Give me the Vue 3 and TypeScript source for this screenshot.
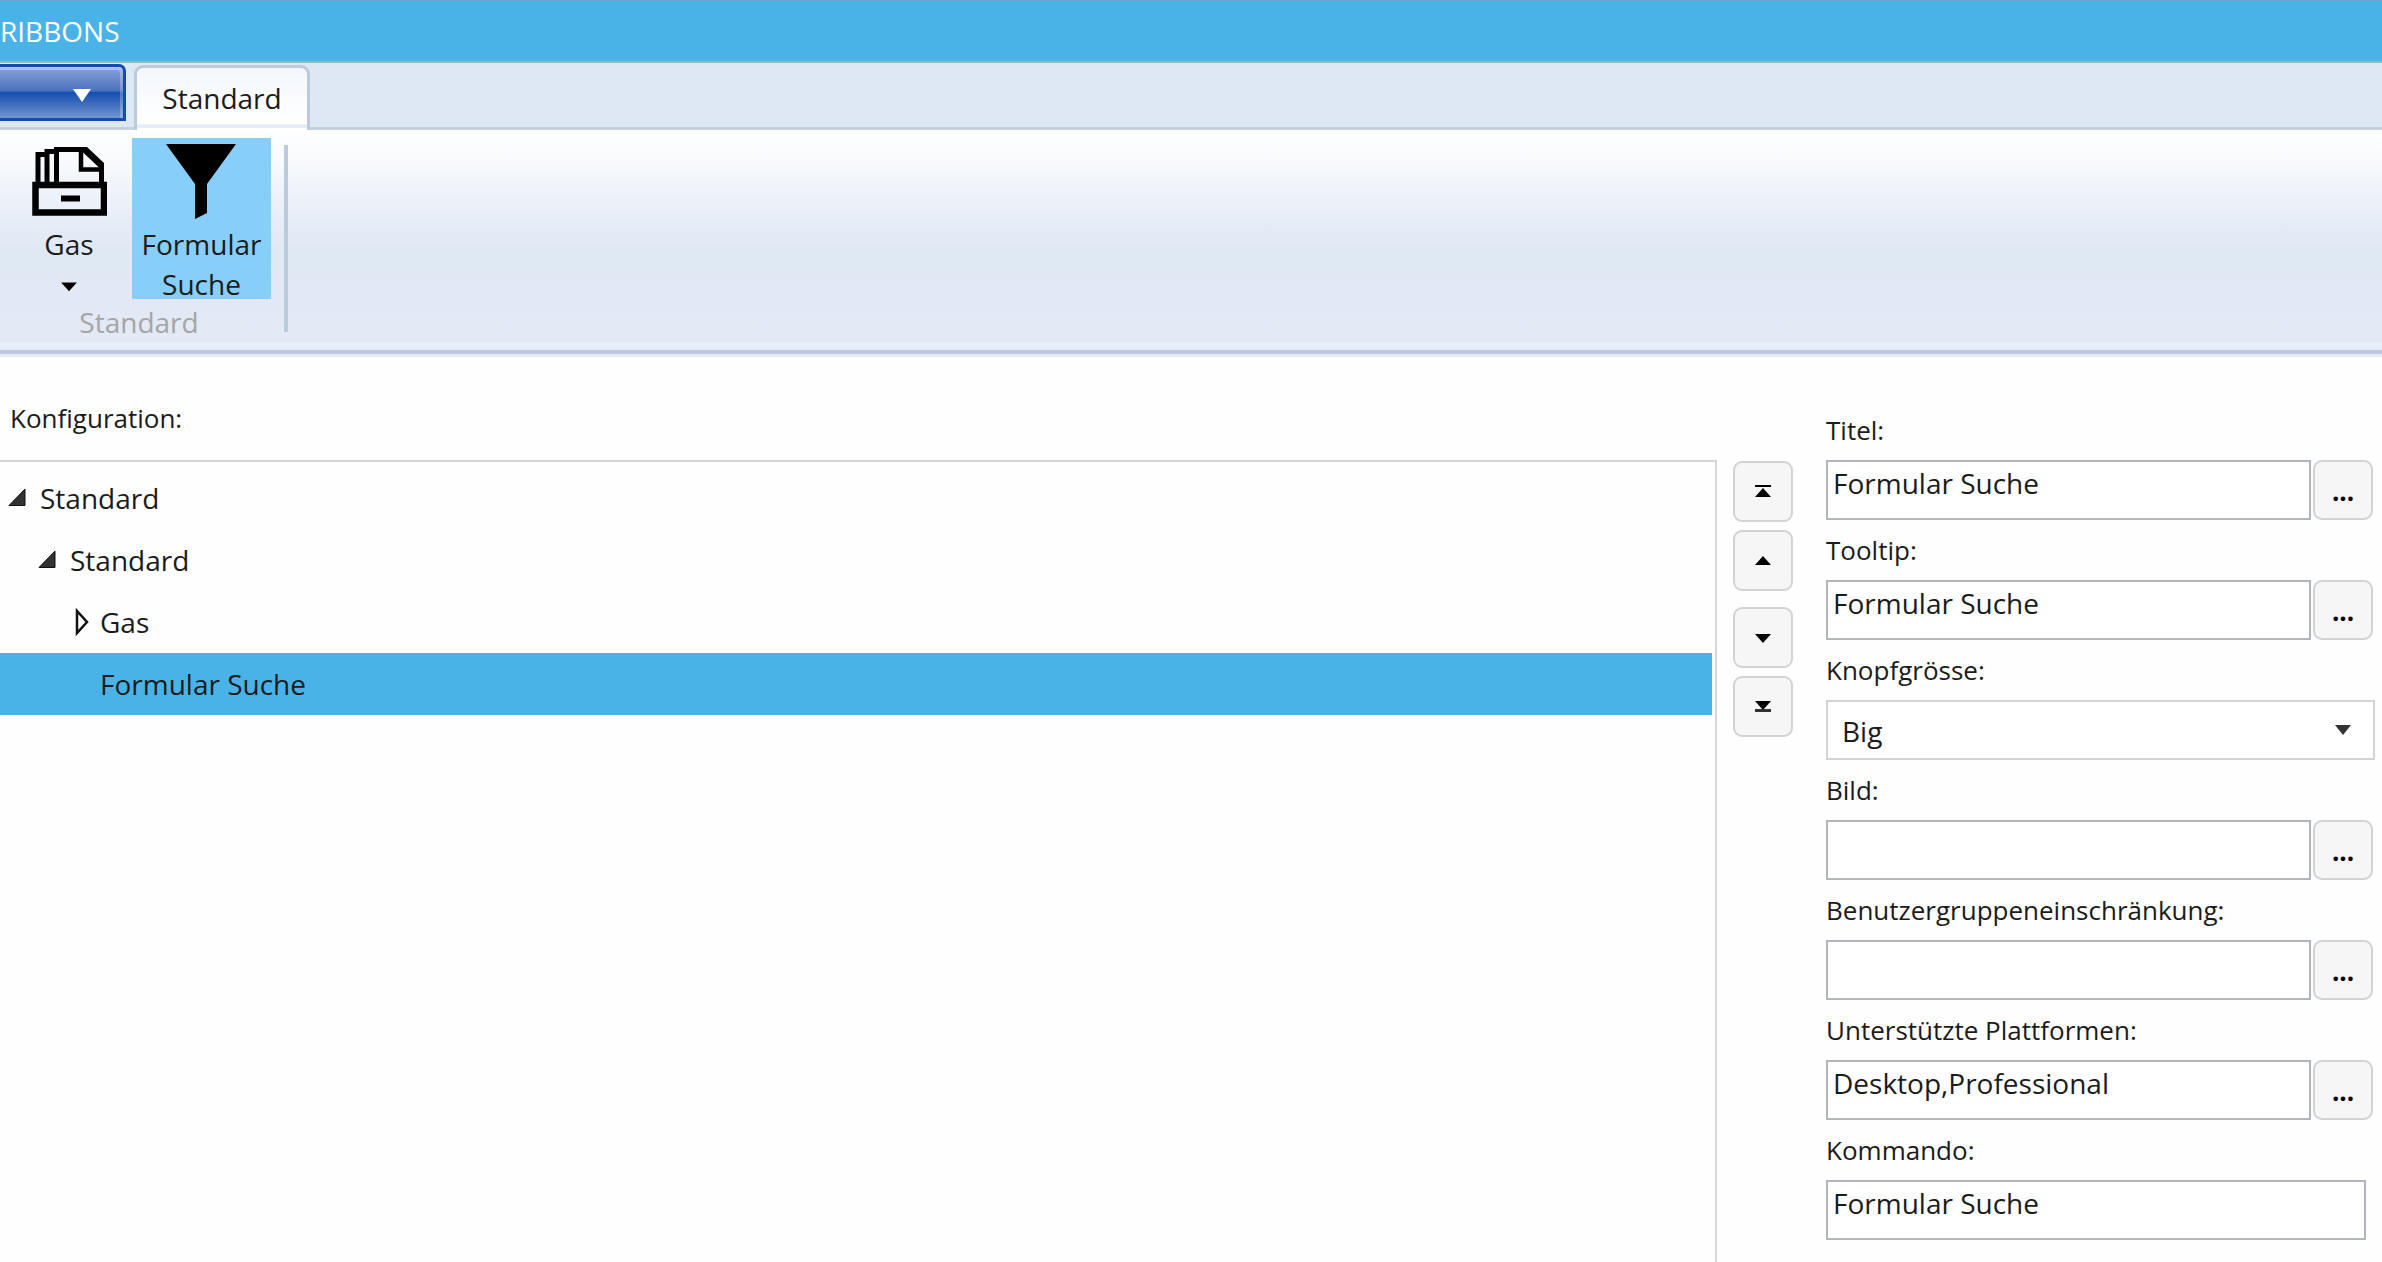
<script setup lang="ts">
import { ref } from 'vue'

interface TreeRow {
  label: string
  level: number
  state: 'open' | 'closed' | 'leaf'
}

interface Field {
  id: string
  label: string
  value: string
  kind: 'browse' | 'select' | 'plain'
}

const rows: TreeRow[] = [
  { label: 'Standard', level: 1, state: 'open' },
  { label: 'Standard', level: 2, state: 'open' },
  { label: 'Gas', level: 3, state: 'closed' },
  { label: 'Formular Suche', level: 3, state: 'leaf' },
]
const selected = ref(3)

const fields = ref<Field[]>([
  { id: 'titel', label: 'Titel:', value: 'Formular Suche', kind: 'browse' },
  { id: 'tooltip', label: 'Tooltip:', value: 'Formular Suche', kind: 'browse' },
  { id: 'groesse', label: 'Knopfgrösse:', value: 'Big', kind: 'select' },
  { id: 'bild', label: 'Bild:', value: '', kind: 'browse' },
  { id: 'gruppen', label: 'Benutzergruppeneinschränkung:', value: '', kind: 'browse' },
  { id: 'plattformen', label: 'Unterstützte Plattformen:', value: 'Desktop,Professional', kind: 'browse' },
  { id: 'kommando', label: 'Kommando:', value: 'Formular Suche', kind: 'plain' },
])
</script>

<template>
  <div class="app">
    <header class="titlebar"><h1>RIBBONS</h1></header>

    <nav class="tabstrip">
      <button class="appmenu" type="button" aria-label="Menü">
        <svg width="20" height="14" viewBox="0 0 20 14"><path d="M1 1H19L10 14Z" fill="#fff" /></svg>
      </button>
      <button class="tab" type="button">Standard</button>
    </nav>

    <section class="ribbon">
      <div class="group">
        <div class="tools">
          <button class="tool gas" type="button">
            <svg class="icon" width="76" height="80" viewBox="0 0 76 80" fill="none" stroke="#000">
              <path d="M7 44V15.500H15M16 44V12.500H25M25.500 44V10.500H55L70.500 25V44" stroke-width="5" />
              <path d="M50 10V30.500H70" stroke-width="4.500" />
              <path d="M53 11L70 27" stroke-width="5" />
              <path d="M4.500 46H73V73.500H4.500Z" stroke-width="6.500" />
              <path d="M30 59.500H49" stroke-width="6" />
            </svg>
            <span>Gas</span>
            <svg class="caret" width="18" height="40" viewBox="0 0 18 40"><path d="M0 21H18L9 31Z" /></svg>
          </button>
          <button class="tool active" type="button">
            <svg class="icon" width="76" height="80" viewBox="0 0 76 80">
              <path d="M2 5H72L43 45V74L31 80V45Z" />
            </svg>
            <span>Formular<br />Suche</span>
          </button>
        </div>
        <div class="caption">Standard</div>
      </div>
    </section>

    <main class="content">
      <section class="config">
        <h2>Konfiguration:</h2>
        <ul class="tree" role="tree">
          <li
            v-for="(row, i) in rows"
            :key="i"
            role="treeitem"
            :class="['row', 'level' + row.level, { selected: selected === i }]"
            @click="selected = i"
          >
            <svg class="expander" width="24" height="30" viewBox="0 0 24 30">
              <path v-if="row.state === 'open'" d="M1 22.500H17V6Z" fill="#333" stroke="#111" />
              <path v-else-if="row.state === 'closed'" d="M9 4V26L19 15Z" fill="#fff" stroke="#111" stroke-width="2.500" />
            </svg>
            <span>{{ row.label }}</span>
          </li>
        </ul>
      </section>

      <div class="order">
        <div class="pair">
          <button type="button" class="square" aria-label="Ganz nach oben">
            <svg width="16" height="14" viewBox="0 0 16 14"><path d="M0 0H16V2H0ZM0 12L8 3L16 12Z" /></svg>
          </button>
          <button type="button" class="square" aria-label="Nach oben">
            <svg width="16" height="14" viewBox="0 0 16 14"><path d="M0 11L8 2L16 11Z" /></svg>
          </button>
        </div>
        <div class="pair">
          <button type="button" class="square" aria-label="Nach unten">
            <svg width="16" height="14" viewBox="0 0 16 14"><path d="M0 3H16L8 12Z" /></svg>
          </button>
          <button type="button" class="square" aria-label="Ganz nach unten">
            <svg width="16" height="14" viewBox="0 0 16 14"><path d="M0 1H16L8 10Z" /><path d="M0 9H16V12H0Z" fill="#333" /></svg>
          </button>
        </div>
      </div>

      <form class="form" @submit.prevent>
        <div v-for="f in fields" :key="f.id" class="field">
          <label :for="f.id">{{ f.label }}</label>
          <div v-if="f.kind === 'select'" class="selectbox">
            <select :id="f.id" v-model="f.value"><option>Big</option></select>
            <svg class="arrow" width="16" height="10" viewBox="0 0 16 10"><path d="M0 0H16L8 10Z" fill="#333" /></svg>
          </div>
          <div v-else :class="['control', f.kind]">
            <input :id="f.id" v-model="f.value" type="text" />
            <button v-if="f.kind === 'browse'" type="button" class="square dots">...</button>
          </div>
        </div>
      </form>
    </main>
  </div>
</template>

<style>
body {
  margin: 0;
  background: #fefefe;
}
</style>

<style scoped>
* {
  box-sizing: border-box;
}
.app {
  display: flex;
  flex-direction: column;
  min-height: 100vh;
  overflow: hidden;
  font-family: "Open Sans", "Noto Sans", sans-serif;
  font-size: 28px;
  line-height: 40px;
  color: #1b1b1b;
}
button,
input,
select {
  font: inherit;
  color: inherit;
  margin: 0;
  padding: 0;
  border-radius: 0;
}
h1,
h2 {
  margin: 0;
  font-weight: 400;
}
.titlebar {
  height: 63px;
  padding-top: 10px;
  background: #49b3e8;
  border-top: 1px solid #6fa9c6;
  border-bottom: 2px solid #a3b2c3;
}
h1 {
  font-size: 28px;
  color: #fff;
}
.tabstrip {
  display: flex;
  align-items: flex-start;
  gap: 8px;
  height: 67px;
  background: #dee8f5;
  border-bottom: 3px solid #c3d1e0;
}
.appmenu {
  display: flex;
  align-items: center;
  justify-content: flex-end;
  width: 126px;
  height: 57px;
  margin-top: 1px;
  padding: 4px 31px 0 0;
  border: 3px solid #134bae;
  border-left: 0;
  border-radius: 0 7px 0 0;
  background: linear-gradient(#a4bbe4 0, #7c9bd4 8%, #4a72bd 47%, #1450b0 50%, #2e62b9 65%, #7396d4);
  box-shadow: inset -3px 3px 0 rgba(255, 255, 255, 0.25);
}
.tab {
  width: 176px;
  height: 65px;
  margin-top: 2px;
  padding-bottom: 2px;
  border: 3px solid #bccbdc;
  border-bottom: 0;
  border-radius: 9px 9px 0 0;
  background: linear-gradient(#f3f7fd, #fff 90%, #e6edf8 92%, #e6edf8 96%, #fff 97%);
}
.ribbon {
  height: 224px;
  padding-top: 8px;
  background: linear-gradient(#fefeff, #f8fafd 14%, #ecf1f9 32%, #e3eaf5 48%, #dfe9f3 55%, #dfe9f3 61%, #e2e8f5 70%, #e3e9f5 96%, #eaf1f8 97%, #e3edf6);
  border-bottom: 4px solid #bccbdb;
}
.group {
  width: 288px;
  height: 203px;
  padding-right: 10px;
  background: linear-gradient(#bccbdc, #bccbdc) right 7px / 4px 187px no-repeat;
}
.tools {
  display: flex;
  gap: 5px;
}
.tool {
  display: flex;
  flex: none;
  flex-direction: column;
  align-items: center;
  width: 139px;
  height: 161px;
  border: 0;
  background: none;
  text-align: center;
}
.tool.gas {
  width: 127px;
  padding-left: 11px;
}
.tool.active {
  background: #87cefa;
}
.icon {
  flex: none;
  margin-top: 1px;
  margin-bottom: 5px;
}
.tool span {
  height: 40px;
}
.caption {
  padding-top: 3px;
  line-height: 40px;
  text-align: center;
  color: #a5a5a5;
}
.content {
  flex: 1;
  display: grid;
  grid-template-columns: minmax(0, 1fr) 60px 589px;
  border-top: 3px solid #e4ebf6;
}
.config {
  display: flex;
  flex-direction: column;
  margin-right: 16px;
}
h2 {
  height: 103px;
  padding: 41px 0 0 10px;
  font-size: 26px;
}
.tree {
  flex: 1;
  margin: 0;
  padding: 5px 3px 0 0;
  border: solid #d5d5d5;
  border-width: 2px 2px 0 0;
  list-style: none;
}
.row {
  display: flex;
  align-items: center;
  height: 62px;
}
.row.selected {
  background: #49b3e8;
}
.expander {
  flex: none;
  margin-right: 8px;
}
.level1 {
  padding-left: 8px;
}
.level2 {
  padding-left: 38px;
}
.level3 {
  padding-left: 68px;
}
.order {
  display: flex;
  flex-direction: column;
  gap: 16px;
  padding-top: 104px;
}
.pair {
  display: flex;
  flex-direction: column;
  gap: 8px;
}
.square {
  display: flex;
  align-items: center;
  justify-content: center;
  flex: none;
  width: 60px;
  height: 61px;
  border: 2px solid #d3d3d3;
  border-radius: 9px;
  background: #f6f6f6;
}
.form {
  margin-left: 33px;
  padding: 53px 7px 0 0;
}
.field {
  height: 120px;
}
label {
  display: block;
  height: 50px;
  font-size: 26px;
}
.control {
  display: flex;
  gap: 2px;
  height: 60px;
  padding-right: 2px;
}
.control.plain {
  padding-right: 9px;
}
input {
  flex: 1;
  min-width: 0;
  height: 60px;
  padding: 0 5px 14px;
  border: 2px solid #b3b5bc;
  background: #fff;
  outline: 0;
}
.dots {
  height: 60px;
  padding-top: 2px;
  font-weight: 700;
  font-size: 26px;
  color: #000;
}
.selectbox {
  display: grid;
  align-items: center;
  height: 60px;
}
select {
  grid-area: 1 / 1;
  width: 100%;
  height: 60px;
  padding: 2px 14px 0;
  border: 2px solid #d3d3d3;
  background: #fff;
  appearance: none;
}
.arrow {
  grid-area: 1 / 1;
  justify-self: end;
  margin-right: 24px;
  pointer-events: none;
}
</style>
